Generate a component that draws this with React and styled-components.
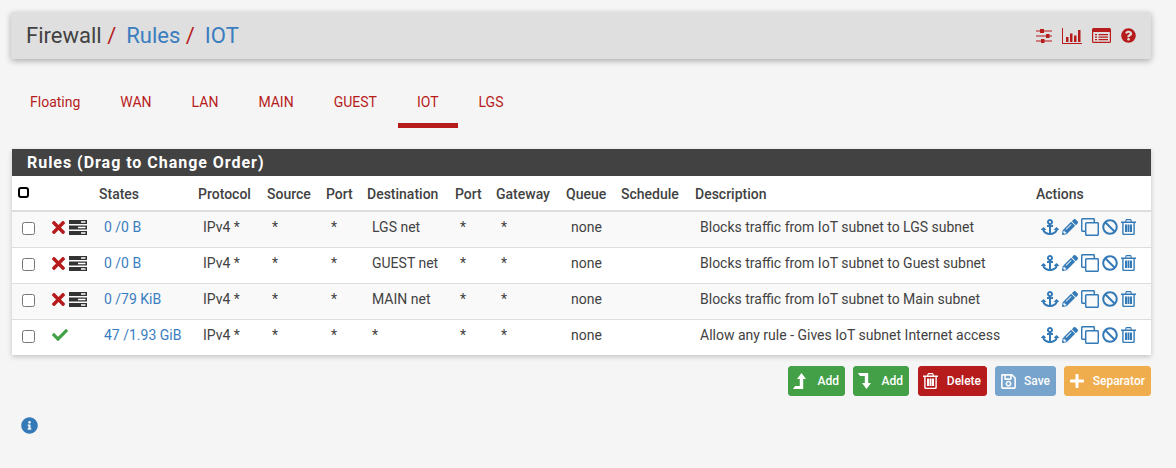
import React from "react";
import styled, { createGlobalStyle } from "styled-components";
import {
  FaAnchor,
  FaPencilAlt,
  FaBan,
  FaTimes,
  FaCheck,
  FaInfoCircle,
  FaQuestionCircle,
  FaRegSave,
  FaPlus,
} from "react-icons/fa";

const tabs = ["Floating", "WAN", "LAN", "MAIN", "GUEST", "IOT", "LGS"];

const columns = [
  { label: "", width: 35 },
  { label: "", width: 47 },
  { label: "States", width: 99 },
  { label: "Protocol", width: 69 },
  { label: "Source", width: 59 },
  { label: "Port", width: 41 },
  { label: "Destination", width: 88 },
  { label: "Port", width: 41 },
  { label: "Gateway", width: 70 },
  { label: "Queue", width: 55 },
  { label: "Schedule", width: 74 },
  { label: "Description", width: 341 },
  { label: "Actions", width: 120 },
];

const rules = [
  { block: true, states: "0 /0 B", dest: "LGS net", desc: "Blocks traffic from IoT subnet to LGS subnet" },
  { block: true, states: "0 /0 B", dest: "GUEST net", desc: "Blocks traffic from IoT subnet to Guest subnet" },
  { block: true, states: "0 /79 KiB", dest: "MAIN net", desc: "Blocks traffic from IoT subnet to Main subnet" },
  { block: false, states: "47 /1.93 GiB", dest: "*", desc: "Allow any rule - Gives IoT subnet Internet access" },
];

const GlobalStyle = createGlobalStyle`
  html, body {
    margin: 0;
    background: #f5f5f5;
    font-family: Roboto, "Liberation Sans", sans-serif;
    color: #424242;
  }
`;

const Page = styled.div`
  width: 1176px;
  height: 468px;
  box-sizing: border-box;
  padding: 12px 25px 0 12px;
  overflow: hidden;
`;

const Header = styled.header`
  height: 47px;
  display: flex;
  align-items: center;
  justify-content: space-between;
  padding: 0 15px 0 15px;
  margin-left: -1px;
  background: #dfdfdf;
  border-radius: 2px;
  box-shadow: 0 2px 6px rgba(0, 0, 0, 0.3);
`;

const Crumbs = styled.h1`
  margin: 0;
  font-size: 22px;
  font-weight: 400;
  line-height: 47px;
  color: #424242;
`;

const CrumbLink = styled.a`
  color: #3a7dbf;
  margin-left: 6px;
`;

const Slash = styled.span`
  color: #b71c1c;
  margin-left: 5.5px;
  margin-right: 4px;
`;

const HeaderIcons = styled.div`
  display: flex;
  align-items: center;
  gap: 10px;
  color: #b71c1c;
`;

const Tabs = styled.nav`
  display: flex;
  gap: 2px;
  margin: 17px 0 0 -1px;
`;

const Tab = styled.a`
  height: 52px;
  box-sizing: border-box;
  padding: 0 19px;
  line-height: 52px;
  font-size: 14px;
  color: #b71c1c;
  border-bottom: 5px solid ${(p) => (p.$active ? "#b71c1c" : "transparent")};
`;

const Panel = styled.section`
  margin-top: 21px;
  background: #fff;
  box-shadow: 0 2px 5px rgba(0, 0, 0, 0.2);
`;

const PanelHeading = styled.h2`
  margin: 0;
  height: 27px;
  padding-left: 15px;
  background: #424242;
  color: #fff;
  font-size: 16px;
  font-weight: 700;
  line-height: 28px;
  letter-spacing: 0.97px;
`;

const Table = styled.table`
  width: 100%;
  table-layout: fixed;
  border-collapse: collapse;
  font-size: 14px;
`;

const HeadCell = styled.th`
  height: 32px;
  padding: 2px 0 0 5px;
  text-align: left;
  font-weight: 500;
  white-space: nowrap;
  border-bottom: 2px solid #ddd;
  color: #424242;
`;

const Row = styled.tr`
  height: 36px;
  background: ${(p) => (p.$odd ? "#f9f9f9" : "#fff")};
  border-top: 1px solid #ddd;
  &:first-child {
    border-top: none;
  }
`;

const Cell = styled.td`
  padding: 0 0 4px ${(p) => p.$pad ?? 10}px;
  white-space: nowrap;
  vertical-align: middle;
`;

const StateLink = styled.a`
  color: #3a7dbf;
`;

const Check = styled.input.attrs({ type: "checkbox" })`
  display: block;
  margin: 3px 0 0;
  width: 13px;
  height: 13px;
`;

const SelectAll = styled.span`
  display: block;
  width: 7px;
  height: 7px;
  margin: -3px 0 0 1px;
  border: 2px solid #000;
  border-radius: 3px;
  background: #fff;
`;

const StatusIcons = styled.div`
  display: flex;
  align-items: center;
  gap: 4px;
`;

const BlockMark = styled(FaTimes)`
  width: 13px;
  height: 19px;
  color: #b71c1c;
`;

const PassMark = styled(FaCheck)`
  width: 16px;
  height: 16px;
  color: #43a047;
`;

const Actions = styled.div`
  display: flex;
  align-items: center;
  gap: 3px;
  color: #337ab7;
`;

const Toolbar = styled.div`
  display: flex;
  justify-content: flex-end;
  gap: 8px;
  margin-top: 11px;
`;

const Button = styled.button`
  height: 30px;
  display: flex;
  align-items: center;
  justify-content: space-between;
  width: ${(p) => p.$w}px;
  margin-left: ${(p) => p.$shift ?? 0}px;
  padding: 0 5px 0 4px;
  border: 1px solid ${(p) => p.$bg};
  border-radius: 3px;
  background: ${(p) => p.$bg};
  color: #fff;
  font-family: inherit;
  font-size: 12px;
  font-weight: 500;
  opacity: ${(p) => p.$opacity ?? 1};
`;

const InfoWrap = styled.div`
  margin: 21px 0 0 9px;
  color: #337ab7;
  line-height: 0;
`;

const Sliders = () => (
  <svg width="16" height="14" viewBox="0 0 16 14" fill="currentColor">
    <path d="M0 1.500h16v1H0zM0 6.500h16v1H0zM0 11.500h16v1H0z" />
    <path d="M4 0h4v4H4zM10 5h3.500v4H10zM5 10h3.500v4H5z" />
  </svg>
);

const BarChart = () => (
  <svg width="20" height="16" viewBox="0 0 20 16" fill="currentColor">
    <path d="M0 0h1v15h19v1H0z" />
    <path d="M4 9h2.500v5H4zM8 5.500h2.500V14H8zM12 7.500h2.500V14H12zM16 2h2.500v12H16z" />
  </svg>
);

const ListAlt = () => (
  <svg width="19" height="15" viewBox="0 0 19 15" fill="currentColor">
    <path d="M1.500 0h16A1.500 1.500 0 0 1 19 1.500v12a1.500 1.500 0 0 1-1.500 1.500h-16A1.500 1.500 0 0 1 0 13.500v-12A1.500 1.500 0 0 1 1.500 0zM1.200 4v9.800h16.600V4z" fillRule="evenodd" />
    <path d="M3 6h2v1.200H3zM6.500 6h9.500v1.200H6.500zM3 8.500h2v1.200H3zM6.500 8.500h9.500v1.200H6.500zM3 11h2v1.200H3zM6.500 11h9.500v1.200H6.500z" />
  </svg>
);

const Shaper = () => (
  <svg width="18" height="15" viewBox="0 0 18 15" fill="#333">
    <path d="M0 0h18v4H0zM0 5.500h18v4H0zM0 11h18v4H0z" />
    <path d="M12 1.300h4.500v1.400H12zM9 6.800h7.500v1.400H9zM12 12.300h4.500v1.400H12z" fill="#fff" />
  </svg>
);

const CloneIcon = () => (
  <svg width="18" height="18" viewBox="0 0 18 18" fill="none" stroke="currentColor" strokeWidth="1.500">
    <path d="M4 13.300H1.700a1 1 0 0 1-1-1V1.700a1 1 0 0 1 1-1h10.600a1 1 0 0 1 1 1V4" />
    <rect x="4.700" y="4.700" width="12.600" height="12.600" rx="1" />
  </svg>
);

// outline bin with a heavy lid, as the font icon has it
const TrashIcon = ({ size = 15 }) => (
  <svg width={size} height={size + 1} viewBox="0 0 15 16" fill="currentColor">
    <path d="M5 0h5l1 2.500h4V4h-1.200v10.500A1.500 1.500 0 0 1 12.300 16H2.700a1.500 1.500 0 0 1-1.500-1.500V4H0V2.500h4zM5.600 1.300l-.4 1.200h4.600l-.4-1.200zM2.600 4v10.300q0 .4.400.4h9q.4 0 .4-.4V4z" fillRule="evenodd" />
    <path d="M4 5.500h2v7.500H4zM6.500 5.500h2v7.500h-2zM9 5.500h2v7.500H9z" />
  </svg>
);

const LevelUp = () => (
  <svg width="13" height="16" viewBox="0 0 13 16" fill="currentColor">
    <path d="M8.500 0L13 6H10.200V16H0L2 13H6.800V6H4z" />
  </svg>
);

const LevelDown = () => (
  <svg width="13" height="16" viewBox="0 0 13 16" fill="currentColor">
    <path d="M0 0H10.200V10H13L8.500 16 4 10H6.800V3H2z" />
  </svg>
);

export default function App() {
  return (
    <Page>
      <GlobalStyle />
      <Header>
        <Crumbs>
          Firewall
          <Slash>/</Slash>
          <CrumbLink>Rules</CrumbLink>
          <Slash>/</Slash>
          <CrumbLink>IOT</CrumbLink>
        </Crumbs>
        <HeaderIcons>
          <Sliders />
          <BarChart />
          <ListAlt />
          <FaQuestionCircle size={15} />
        </HeaderIcons>
      </Header>

      <Tabs>
        {tabs.map((t) => (
          <Tab key={t} $active={t === "IOT"}>
            {t}
          </Tab>
        ))}
      </Tabs>

      <Panel>
        <PanelHeading>Rules (Drag to Change Order)</PanelHeading>
        <Table>
          <colgroup>
            {columns.map((c, i) => (
              <col key={i} width={c.width} />
            ))}
          </colgroup>
          <thead>
            <tr>
              {columns.map((c, i) => (
                <HeadCell key={i}>{i === 0 ? <SelectAll /> : c.label}</HeadCell>
              ))}
            </tr>
          </thead>
          <tbody>
            {rules.map((r, i) => (
              <Row key={i} $odd={i % 2 === 0}>
                <Cell>
                  <Check />
                </Cell>
                <Cell $pad={5}>
                  <StatusIcons>
                    {r.block ? <BlockMark /> : <PassMark />}
                    {r.block && <Shaper />}
                  </StatusIcons>
                </Cell>
                <Cell>
                  <StateLink>{r.states}</StateLink>
                </Cell>
                <Cell>IPv4 *</Cell>
                <Cell>*</Cell>
                <Cell>*</Cell>
                <Cell>{r.dest}</Cell>
                <Cell>*</Cell>
                <Cell>*</Cell>
                <Cell>none</Cell>
                <Cell />
                <Cell>{r.desc}</Cell>
                <Cell>
                  <Actions>
                    <FaAnchor size={18} />
                    <FaPencilAlt size={16} />
                    <CloneIcon />
                    <FaBan size={16} />
                    <TrashIcon />
                  </Actions>
                </Cell>
              </Row>
            ))}
          </tbody>
        </Table>
      </Panel>

      <Toolbar>
        <Button $w={57} $bg="#43a047">
          <LevelUp />
          Add
        </Button>
        <Button $w={56} $bg="#43a047">
          <LevelDown />
          Add
        </Button>
        <Button $w={69} $shift={1} $bg="#b71c1c">
          <TrashIcon />
          Delete
        </Button>
        <Button $w={61} $bg="#337ab7" $opacity={0.65}>
          <FaRegSave size={17} />
          Save
        </Button>
        <Button $w={87} $bg="#f0ad4e">
          <FaPlus size={16} />
          Separator
        </Button>
      </Toolbar>

      <InfoWrap>
        <FaInfoCircle size={17} />
      </InfoWrap>
    </Page>
  );
}
